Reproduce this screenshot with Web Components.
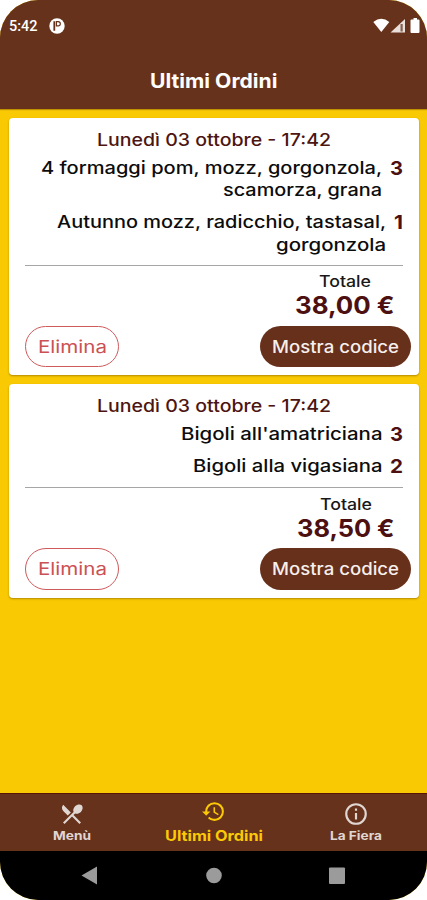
<!DOCTYPE html>
<html lang="it">
<head>
<meta charset="utf-8">
<title>Ultimi Ordini</title>
<style>
  html, body { margin: 0; height: 100%; background: #fff; }
  body { font-family: Inter, "Open Sans", sans-serif; }
</style>
</head>
<body>
<orders-app></orders-app>

<script>
class WideText extends HTMLElement {
  connectedCallback() {
    this.attachShadow({ mode: 'open' });
    this.shadowRoot.innerHTML = `
      <style>
        :host { display: block; white-space: nowrap; text-align: left; }
        span { display: inline-block; transform-origin: 0 50%; vertical-align: top; }
      </style>
      <span><slot></slot></span>
    `;
    const width = parseFloat(this.getAttribute('width'));
    const span = this.shadowRoot.querySelector('span');
    this.style.width = width + 'px';
    span.style.transform = `scaleX(${width / span.getBoundingClientRect().width})`;
  }
}

class StatusBar extends HTMLElement {
  connectedCallback() {
    this.attachShadow({ mode: 'open' });
    this.shadowRoot.innerHTML = `
      <style>
        :host {
          display: flex; align-items: center; height: 52px; box-sizing: border-box;
          padding: 0 7px 0 9px; color: #fff;
          font: 500 15px/20px Roboto, sans-serif;
        }
        .dot { margin-left: 11px; }
        .right { margin-left: auto; }
        svg { display: block; }
      </style>
      <wide-text width="28.5">5:42</wide-text>
      <svg class="dot" width="16" height="16" viewBox="0 0 16 16">
        <circle cx="8" cy="8" r="7.7" fill="#fff"/>
        <path d="M5.300 3.300v9.400" fill="none" stroke="#67321b" stroke-width="1.800"/>
        <path d="M7.400 3.600h1.800a2 2 0 0 1 0 4.200H7.400z" fill="none" stroke="#67321b" stroke-width="1.200"/>
      </svg>
      <svg class="right" width="47" height="18" viewBox="0 0 47 18">
        <path d="M.3 5Q8.300-1.500 16.300 5L8.300 15Z" fill="#fff"/>
        <path d="M32 2V15.500H17.500Z" fill="#e9dfdb"/>
        <path d="M27.500 7h2.200v7.500h-2.200z" fill="#84604f"/>
        <path d="M40.500 1h3.500v1.500h1.500a1 1 0 0 1 1 1V15a1 1 0 0 1-1 1H38.500a1 1 0 0 1-1-1V3.500a1 1 0 0 1 1-1h2z" fill="#fff"/>
      </svg>
    `;
  }
}

class OrderItem extends HTMLElement {
  connectedCallback() {
    this.attachShadow({ mode: 'open' });
    this.shadowRoot.innerHTML = `
      <style>
        :host {
          display: flex; justify-content: flex-end; gap: 8px;
          padding-bottom: 9px; color: #0c0c0c;
          font-size: 17px; font-weight: 500; line-height: 22.600px;
        }
        .lines { display: flex; flex-direction: column; align-items: flex-end; }
        .qty { margin-top: 1px; font-size: 19px; font-weight: 700; line-height: 22.200px; color: #4d1010; }
      </style>
      <div class="lines"><slot></slot></div>
      <wide-text class="qty" width="${this.getAttribute('qty-width') || 13}">${this.getAttribute('qty')}</wide-text>
    `;
  }
}

class OrderCard extends HTMLElement {
  connectedCallback() {
    this.attachShadow({ mode: 'open' });
    this.shadowRoot.innerHTML = `
      <style>
        :host {
          display: block; box-sizing: border-box; padding: 11.800px 8px 8px 16px;
          background: #fff; border-radius: 4px;
          box-shadow: 0 1px 2px rgba(90, 60, 0, .45);
        }
        .date { margin: 0 0 5.600px 72px; color: #4d1512; font-size: 17px; font-weight: 500; line-height: 22px; }
        .items { padding-right: 8px; }
        hr { margin: -.6px 8px 6.800px 0; border: 0; height: 1px; background: #a6a6a6; }
        .total { display: flex; flex-direction: column; align-items: center; width: fit-content; margin: 0 16.500px 5.400px auto; }
        .label { font-size: 15.500px; font-weight: 500; line-height: 20px; color: #181818; }
        .amount { font-size: 24px; font-weight: 700; line-height: 28px; color: #4d1010; }
        .actions { display: flex; justify-content: space-between; }
        button {
          display: flex; align-items: center; justify-content: center;
          height: 41.500px; box-sizing: border-box; padding: 1px 0 0; border-radius: 21px;
          font: 500 17px/22px Inter, sans-serif;
        }
        .delete { width: 94px; border: 1px solid #cf5a5c; background: #fff; color: #cc5154; font-weight: 400; }
        .show { width: 151.500px; border: 0; background: #67301b; color: #f6efec; }
      </style>
      <wide-text class="date" width="234">${this.getAttribute('date')}</wide-text>
      <div class="items"><slot></slot></div>
      <hr>
      <div class="total">
        <wide-text class="label" width="52">Totale</wide-text>
        <wide-text class="amount" width="${this.getAttribute('total-width')}">${this.getAttribute('total')}</wide-text>
      </div>
      <div class="actions">
        <button class="delete"><wide-text width="69">Elimina</wide-text></button>
        <button class="show"><wide-text width="127">Mostra codice</wide-text></button>
      </div>
    `;
  }
}

class NavTab extends HTMLElement {
  connectedCallback() {
    this.attachShadow({ mode: 'open' });
    this.shadowRoot.innerHTML = `
      <style>
        :host {
          display: flex; flex-direction: column; align-items: center; justify-content: space-between;
          flex: 1; padding: 6.500px 0 7px 1px; color: #e0d6d2;
          font-size: 12px; font-weight: 700; line-height: 16px;
        }
        :host([active]) { padding-top: 5px; color: #fbc905; font-size: 14.500px; }
      </style>
      <slot></slot>
      <wide-text width="${this.getAttribute('label-width')}">${this.getAttribute('label')}</wide-text>
    `;
  }
}

class OrdersApp extends HTMLElement {
  connectedCallback() {
    this.attachShadow({ mode: 'open' });
    this.shadowRoot.innerHTML = `
      <style>
        :host {
          display: flex; flex-direction: column; height: 900px; overflow: hidden;
          background: #f9c903; border-radius: 38px;
        }
        header { height: 109px; background: #67321b; box-shadow: 0 1px 1px rgba(80, 40, 0, .35); }
        h1 { display: flex; justify-content: center; margin: 17px 0 0 1px; font-size: 19.500px; font-weight: 700; line-height: 24px; color: #fff; }
        main { flex: 1; display: flex; flex-direction: column; gap: 8.300px; padding: 8.500px 8px 0 9px; }
        nav { display: flex; height: 58px; box-sizing: border-box; border-top: 1px solid #581407; background: #67321b; }
        footer { display: flex; align-items: center; height: 49px; background: #000; }
        svg { display: block; }
      </style>
      <header>
        <status-bar></status-bar>
        <h1><wide-text width="127.5">Ultimi Ordini</wide-text></h1>
      </header>
      <main>
        <order-card date="Lunedì 03 ottobre - 17:42" total="38,00 €" total-width="99.5">
          <order-item qty="3">
            <wide-text width="341">4 formaggi pom, mozz, gorgonzola,</wide-text>
            <wide-text width="159">scamorza, grana</wide-text>
          </order-item>
          <order-item qty="1" qty-width="9">
            <wide-text width="329">Autunno mozz, radicchio, tastasal,</wide-text>
            <wide-text width="110">gorgonzola</wide-text>
          </order-item>
        </order-card>
        <order-card date="Lunedì 03 ottobre - 17:42" total="38,50 €" total-width="97.5">
          <order-item qty="3"><wide-text width="201.5">Bigoli all'amatriciana</wide-text></order-item>
          <order-item qty="2"><wide-text width="189.5">Bigoli alla vigasiana</wide-text></order-item>
        </order-card>
      </main>
      <nav>
        <nav-tab label="Menù" label-width="38">
          <svg width="26" height="26" viewBox="0 0 24 24" fill="currentColor">
            <path d="M8.100 13.340l2.830-2.830L3.910 3.500c-1.560 1.560-1.560 4.090 0 5.660l4.190 4.180zm6.780-1.810c1.530.71 3.680.21 5.270-1.380 1.910-1.910 2.280-4.650.81-6.120-1.460-1.460-4.200-1.100-6.120.81-1.590 1.590-2.090 3.740-1.380 5.270L3.700 19.870l1.410 1.410L12 14.410l6.880 6.880 1.410-1.410L13.410 13l1.470-1.470z"/>
          </svg>
        </nav-tab>
        <nav-tab active label="Ultimi Ordini" label-width="98">
          <svg width="25" height="25" viewBox="0 0 24 24" fill="currentColor">
            <path d="M13 3a9 9 0 0 0-9 9H1l3.890 3.890.07.14L9 12H6c0-3.870 3.130-7 7-7s7 3.130 7 7-3.130 7-7 7c-1.930 0-3.680-.79-4.940-2.060l-1.420 1.420A8.950 8.950 0 0 0 13 21a9 9 0 0 0 0-18zm-1 5v5l4.280 2.540.72-1.210-3.500-2.080V8H12z"/>
          </svg>
        </nav-tab>
        <nav-tab label="La Fiera" label-width="52">
          <svg width="26" height="26" viewBox="0 0 24 24" fill="currentColor">
            <path d="M11 7h2v2h-2zm0 4h2v6h-2zm1-9a10 10 0 1 0 0 20 10 10 0 0 0 0-20zm0 18a8 8 0 1 1 0-16 8 8 0 0 1 0 16z"/>
          </svg>
        </nav-tab>
      </nav>
      <footer>
        <svg width="427" height="49" viewBox="0 0 427 49" fill="#9b9b9b">
          <path d="M81.500 24.500L97 15.500V33.500Z"/>
          <circle cx="214" cy="24.500" r="7.800"/>
          <rect x="329" y="16.500" width="16" height="16.500" rx="1"/>
        </svg>
      </footer>
    `;
  }
}

customElements.define('wide-text', WideText);
customElements.define('status-bar', StatusBar);
customElements.define('order-item', OrderItem);
customElements.define('order-card', OrderCard);
customElements.define('nav-tab', NavTab);
customElements.define('orders-app', OrdersApp);
</script>
</body>
</html>
